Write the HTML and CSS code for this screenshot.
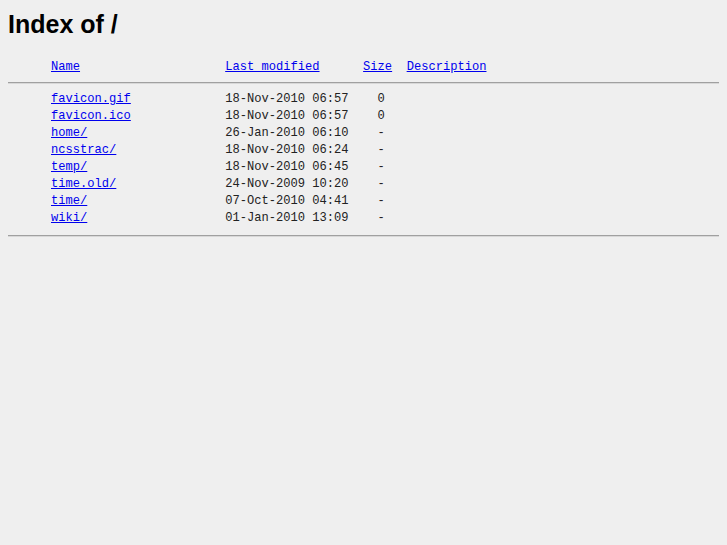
FILE: index.html
```html
<!DOCTYPE html>
<html lang="en">
  <head>
    <meta charset="UTF-8" />
    <title>Index of /</title>
    <link rel="stylesheet" href="styles.css">
  </head>
  <body>
    <h1 class="title">Index of /</h1>
    <pre class="listing"><span class="icon"></span><a href="?C=N;O=D">Name</a>                    <a href="?C=M;O=A">Last modified</a>      <a href="?C=S;O=A">Size</a>  <a href="?C=D;O=A">Description</a><hr class="rule"><span class="icon"></span><a href="favicon.gif">favicon.gif</a>             18-Nov-2010 06:57    0
<span class="icon"></span><a href="favicon.ico">favicon.ico</a>             18-Nov-2010 06:57    0
<span class="icon"></span><a href="home/">home/</a>                   26-Jan-2010 06:10    -
<span class="icon"></span><a href="ncsstrac/">ncsstrac/</a>               18-Nov-2010 06:24    -
<span class="icon"></span><a href="temp/">temp/</a>                   18-Nov-2010 06:45    -
<span class="icon"></span><a href="time.old/">time.old/</a>               24-Nov-2009 10:20    -
<span class="icon"></span><a href="time/">time/</a>                   07-Oct-2010 04:41    -
<span class="icon"></span><a href="wiki/">wiki/</a>                   01-Jan-2010 13:09    -
<hr class="rule rule-end"></pre>
  </body>
</html>
```

FILE: styles.css
```css
body {
  margin: 8px;
  background-color: #efefef;
  font-family: "Liberation Sans", Arial, sans-serif;
  color: #000;
}
.title {
  font-size: 25px;
  font-weight: bold;
  margin: 2px 0 0;
  line-height: 28px;
}
.listing {
  font-family: "Liberation Mono", "Courier New", monospace;
  font-size: 12.1px;
  line-height: 17px;
  color: #222;
  margin: 21px 0 0;
}
.listing a {
  color: #0000ee;
}
.icon {
  display: inline-block;
  width: 43px;
}
.rule {
  border: none;
  border-top: 1px solid #a0a0a0;
  border-bottom: 1px solid #d8d8d8;
  margin: 6px 0 7px -1px;
}
.rule-end {
  margin-top: 8px;
}
```
